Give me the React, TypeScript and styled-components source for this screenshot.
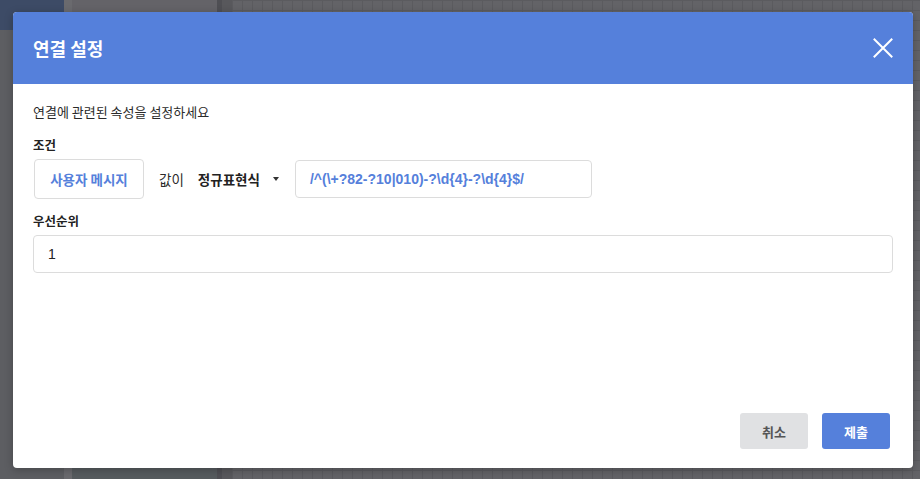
import React from "react";
import styled, { createGlobalStyle } from "styled-components";

const Global = createGlobalStyle`
  html, body { margin: 0; padding: 0; }
  body {
    width: 920px;
    height: 479px;
    overflow: hidden;
    font-family: "Liberation Sans", "Noto Sans CJK KR", sans-serif;
  }
  * { box-sizing: border-box; }
`;

const Page = styled.div`
  position: relative;
  width: 920px;
  height: 479px;
  display: flex;
  background: #606165;
  overflow: hidden;
`;

const Sidebar = styled.div`
  width: 64px;
  display: flex;
  flex-direction: column;
  background: #5d5e62;
`;

const SidebarTop = styled.div`
  height: 30px;
  background: #3d4b66;
`;

const Strip = styled.div<{ $w: number; $bg: string }>`
  width: ${(p) => p.$w}px;
  background: ${(p) => p.$bg};
  flex-shrink: 0;
`;

const Panel = styled.div`
  width: 145px;
  display: flex;
  flex-direction: column;
  justify-content: flex-end;
  background: #646368;
`;

const PanelFoot = styled.div`
  height: 14px;
  background: #565b5e;
`;

const Grid = styled.div`
  flex: 1;
  background-color: #636367;
  background-image: linear-gradient(#5b5b5f 1px, transparent 1px),
    linear-gradient(90deg, #5b5b5f 1px, transparent 1px);
  background-size: 10px 10px;
`;

const Dialog = styled.div`
  position: absolute;
  left: 13px;
  top: 12px;
  width: 900px;
  height: 456px;
  background: #ffffff;
  border-radius: 4px;
  overflow: hidden;
  display: flex;
  flex-direction: column;
  box-shadow: 0 2px 8px rgba(0, 0, 0, 0.25);
`;

const Header = styled.div`
  height: 72px;
  background: #5580db;
  display: flex;
  align-items: center;
  justify-content: space-between;
  padding: 0 20px;
`;

const Title = styled.h1`
  margin: 0;
  font-family: "Noto Sans CJK KR", sans-serif;
  font-size: 18px;
  font-weight: 700;
  color: #ffffff;
`;

const CloseButton = styled.button`
  width: 20px;
  height: 20px;
  padding: 0;
  border: none;
  background: transparent;
  display: flex;
  align-items: center;
  justify-content: center;
  cursor: pointer;
`;

const Body = styled.div`
  flex: 1;
  padding: 18px 20px 0;
  display: flex;
  flex-direction: column;
`;

const Subtitle = styled.p`
  margin: 0;
  font-family: "Noto Sans CJK KR", sans-serif;
  font-size: 13px;
  line-height: 20px;
  color: #2a2a2a;
`;

const Label = styled.div<{ $mt: number }>`
  margin-top: ${(p) => p.$mt}px;
  font-family: "Noto Sans CJK KR", sans-serif;
  font-size: 12.5px;
  font-weight: 700;
  line-height: 18px;
  color: #222222;
`;

const Row = styled.div`
  margin-top: 5px;
  display: flex;
  align-items: center;
`;

const SourceButton = styled.button`
  margin-left: 1px;
  height: 40px;
  width: 110px;
  border: 1px solid #dcdcdc;
  border-radius: 4px;
  background: #ffffff;
  color: #5580db;
  font-family: "Noto Sans CJK KR", sans-serif;
  font-size: 13.5px;
  font-weight: 700;
  padding: 0;
`;

const Plain = styled.span`
  margin-left: 15px;
  font-family: "Noto Sans CJK KR", sans-serif;
  font-size: 13.5px;
  color: #2a2a2a;
`;

const Select = styled.div`
  margin-left: 14px;
  display: flex;
  align-items: center;
  gap: 13px;
  font-family: "Noto Sans CJK KR", sans-serif;
  font-size: 13.5px;
  font-weight: 700;
  color: #222222;
`;

const Caret = styled.span`
  width: 0;
  height: 0;
  border-left: 3.5px solid transparent;
  border-right: 3.5px solid transparent;
  border-top: 4px solid #333333;
`;

const Input = styled.div<{ $w?: number; $blue?: boolean }>`
  height: 38px;
  width: ${(p) => (p.$w ? `${p.$w}px` : "100%")};
  border: 1px solid #dcdcdc;
  border-radius: 4px;
  display: flex;
  align-items: center;
  padding: 0 14px;
  font-family: "Liberation Sans", "Noto Sans CJK KR", sans-serif;
  font-size: 14px;
  font-weight: ${(p) => (p.$blue ? 700 : 400)};
  color: ${(p) => (p.$blue ? "#5580db" : "#222222")};
`;

const RegexInput = styled(Input)`
  margin-left: 16px;
`;

const Footer = styled.div`
  display: flex;
  justify-content: flex-end;
  gap: 14px;
  padding: 0 23px 19px 0;
`;

const ActionButton = styled.button<{ $primary?: boolean }>`
  width: 68px;
  height: 36px;
  border: none;
  border-radius: 3px;
  background: ${(p) => (p.$primary ? "#5580db" : "#e0e1e3")};
  color: ${(p) => (p.$primary ? "#ffffff" : "#555555")};
  font-family: "Noto Sans CJK KR", sans-serif;
  font-size: 13px;
  font-weight: 700;
  padding: 0;
`;

export default function App() {
  return (
    <>
      <Global />
      <Page>
        <Sidebar>
          <SidebarTop />
        </Sidebar>
        <Strip $w={8} $bg="#6a6a6e" />
        <Panel>
          <PanelFoot />
        </Panel>
        <Strip $w={5} $bg="#4f4f54" />
        <Strip $w={10} $bg="#58585c" />
        <Grid />
        <Dialog>
          <Header>
            <Title>연결 설정</Title>
            <CloseButton aria-label="닫기">
              <svg width="20" height="20" viewBox="0 0 20 20">
                <path d="M1.5 1.5 L18.5 18.5 M18.5 1.5 L1.5 18.5" stroke="#ffffff" strokeWidth="2" strokeLinecap="square" />
              </svg>
            </CloseButton>
          </Header>
          <Body>
            <Subtitle>연결에 관련된 속성을 설정하세요</Subtitle>
            <Label $mt={14}>조건</Label>
            <Row>
              <SourceButton>사용자 메시지</SourceButton>
              <Plain>값이</Plain>
              <Select>
                정규표현식
                <Caret />
              </Select>
              <RegexInput $w={297} $blue>
                /^(\+?82-?10|010)-?\d{"{4}"}-?\d{"{4}"}$/
              </RegexInput>
            </Row>
            <Label $mt={13}>우선순위</Label>
            <Row>
              <Input>1</Input>
            </Row>
          </Body>
          <Footer>
            <ActionButton>취소</ActionButton>
            <ActionButton $primary>제출</ActionButton>
          </Footer>
        </Dialog>
      </Page>
    </>
  );
}
